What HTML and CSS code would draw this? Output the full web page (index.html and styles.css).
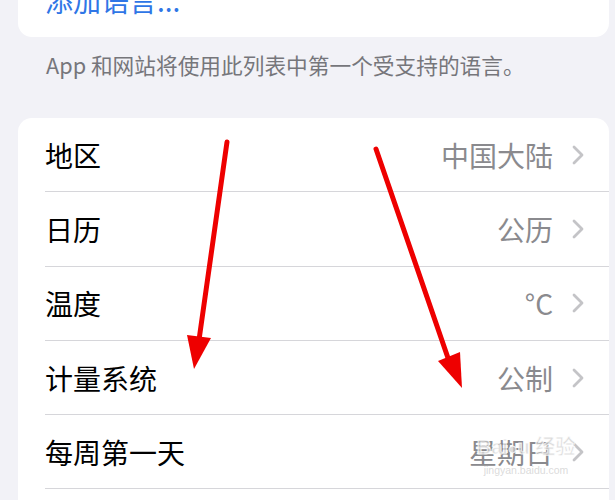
FILE: index.html
```html
<!DOCTYPE html>
<html lang="zh-CN">
<head>
<meta charset="utf-8">
<title>语言与地区</title>
<link rel="stylesheet" href="styles.css">
</head>
<body>
<div class="page">
  <div class="card card-top">
    <div class="row row-link"><span class="link">添加语言...</span></div>
  </div>
  <p class="footer">App 和网站将使用此列表中第一个受支持的语言。</p>
  <div class="card card-main">
    <div class="row"><span class="label">地区</span><span class="value">中国大陆</span><svg class="chev" width="12" height="20" viewBox="0 0 12 20"><polyline points="2,2 10,10 2,18" fill="none" stroke="#c4c4c7" stroke-width="2.8" stroke-linecap="round" stroke-linejoin="round"/></svg></div>
    <div class="row"><span class="label">日历</span><span class="value">公历</span><svg class="chev" width="12" height="20" viewBox="0 0 12 20"><polyline points="2,2 10,10 2,18" fill="none" stroke="#c4c4c7" stroke-width="2.8" stroke-linecap="round" stroke-linejoin="round"/></svg></div>
    <div class="row"><span class="label">温度</span><span class="value">°C</span><svg class="chev" width="12" height="20" viewBox="0 0 12 20"><polyline points="2,2 10,10 2,18" fill="none" stroke="#c4c4c7" stroke-width="2.8" stroke-linecap="round" stroke-linejoin="round"/></svg></div>
    <div class="row"><span class="label">计量系统</span><span class="value">公制</span><svg class="chev" width="12" height="20" viewBox="0 0 12 20"><polyline points="2,2 10,10 2,18" fill="none" stroke="#c4c4c7" stroke-width="2.8" stroke-linecap="round" stroke-linejoin="round"/></svg></div>
    <div class="row"><span class="label">每周第一天</span><span class="value">星期日</span><svg class="chev" width="12" height="20" viewBox="0 0 12 20"><polyline points="2,2 10,10 2,18" fill="none" stroke="#c4c4c7" stroke-width="2.8" stroke-linecap="round" stroke-linejoin="round"/></svg></div>
    <div class="row-rest"></div>
  </div>
</div>
<svg class="arrows" width="615" height="500" viewBox="0 0 615 500">
  <line x1="227" y1="142" x2="199" y2="340" stroke="#ee0000" stroke-width="5" stroke-linecap="round"/>
  <polygon points="187,335 211,338 194,369" fill="#ee0000"/>
  <line x1="376" y1="149" x2="448" y2="358" stroke="#ee0000" stroke-width="5" stroke-linecap="round"/>
  <polygon points="438,361 460,352 462,388" fill="#ee0000"/>
</svg>
<div class="watermark">
  <span class="wm-main">Bai<span class="paw">●</span>u 经验</span>
  <span class="wm-sub">jingyan.baidu.com</span>
</div>
</body>
</html>
```
FILE: styles.css
```css
html, body {
  margin: 0;
  padding: 0;
}
body {
  background: #f2f2f7;
  font-family: "Noto Sans CJK SC", "Noto Sans", sans-serif;
  width: 615px;
  height: 500px;
  overflow: hidden;
  position: relative;
}
.page {
  display: flex;
  flex-direction: column;
  padding: 0 6px 0 18px;
}
.card {
  background: #fff;
  border-radius: 14px;
  overflow: hidden;
}
.card-top {
  margin-top: -37px;
}
.row {
  box-sizing: border-box;
  height: 74.3px;
  margin-left: 27px;
  padding-right: 25px;
  display: flex;
  align-items: center;
  border-bottom: 1px solid #d6d6da;
}
.card-top .row {
  height: 74px;
  border-bottom: none;
}
.row-rest {
  height: 40px;
}
.link {
  color: #2f76e6;
  font-size: 28px;
  line-height: 1;
}
.footer {
  margin: 0;
  padding: 0 0 26px 28px;
  height: 81px;
  display: flex;
  align-items: center;
  font-size: 21.7px;
  color: #76767b;
  line-height: 1;
  box-sizing: border-box;
}
.card-main {
  border-radius: 14px 14px 0 0;
}
.label {
  font-size: 28px;
  color: #000;
  line-height: 1;
  flex: 1;
}
.value {
  font-size: 28px;
  color: #8a8a8e;
  line-height: 1;
  margin-right: 19px;
}
.chev {
  display: block;
  flex: none;
}
.arrows {
  position: absolute;
  left: 0;
  top: 0;
  pointer-events: none;
}
.watermark {
  position: absolute;
  left: 464px;
  top: 437px;
  width: 124px;
  display: flex;
  flex-direction: column;
  align-items: center;
  color: rgba(205, 205, 205, 0.7);
  pointer-events: none;
}
.wm-main {
  font-family: "Liberation Sans", "Noto Sans CJK SC", sans-serif;
  font-size: 20px;
  font-weight: bold;
  line-height: 1;
  -webkit-text-stroke: 1px rgba(255,255,255,0.8);
}
.paw {
  font-size: 16px;
}
.wm-sub {
  font-family: "Liberation Sans", sans-serif;
  font-size: 10.5px;
  line-height: 1;
  margin-top: 8px;
  color: rgba(210, 210, 210, 0.8);
}
```
